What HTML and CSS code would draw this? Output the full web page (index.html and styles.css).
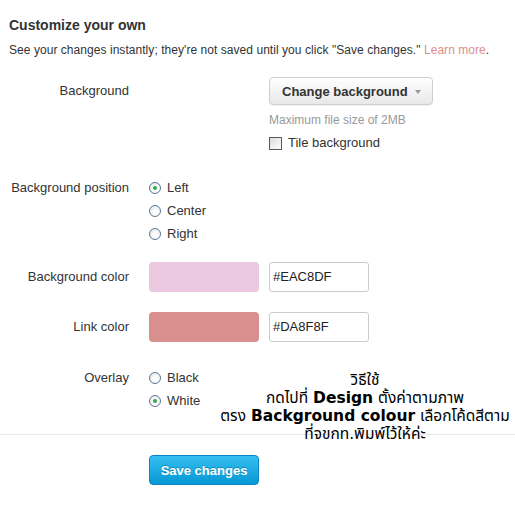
FILE: index.html
```html
<!DOCTYPE html>
<html>
<head>
<meta charset="utf-8">
<link rel="stylesheet" href="styles.css">
</head>
<body>
<div class="page">
  <div class="intro">
    <h2 class="title">Customize your own</h2>
    <p class="desc">See your changes instantly; they're not saved until you click "Save changes." <a class="link" href="#">Learn more</a>.</p>
  </div>

  <div class="form">
    <div class="row row-bg">
      <div class="label label-tall">Background</div>
      <div class="controls offset">
        <button class="btn-change">Change background <span class="caret"></span></button>
        <div class="hint">Maximum file size of 2MB</div>
        <label class="check"><span class="checkbox"></span>Tile background</label>
      </div>
    </div>

    <div class="row row-pos">
      <div class="label label-radio">Background position</div>
      <div class="controls">
        <label class="radio-line"><span class="radio checked"></span>Left</label>
        <label class="radio-line"><span class="radio"></span>Center</label>
        <label class="radio-line"><span class="radio"></span>Right</label>
      </div>
    </div>

    <div class="row row-color">
      <div class="label label-swatch">Background color</div>
      <div class="controls color-ctrl">
        <span class="swatch swatch-bg"></span>
        <span class="hex">#EAC8DF</span>
      </div>
    </div>

    <div class="row row-link">
      <div class="label label-swatch">Link color</div>
      <div class="controls color-ctrl">
        <span class="swatch swatch-link"></span>
        <span class="hex">#DA8F8F</span>
      </div>
    </div>

    <div class="row row-overlay">
      <div class="label label-radio">Overlay</div>
      <div class="controls">
        <label class="radio-line"><span class="radio"></span>Black</label>
        <label class="radio-line"><span class="radio checked"></span>White</label>
      </div>
    </div>
  </div>

  <div class="footer">
    <button class="btn-save">Save changes</button>
  </div>

  <div class="note">
    <div>วิธีใช้</div>
    <div>กดไปที่ <b>Design</b> ตั้งค่าตามภาพ</div>
    <div>ตรง <b>Background colour</b> เลือกโค้ดสีตาม</div>
    <div>ที่จขกท.พิมพ์ไว้ให้ค่ะ</div>
  </div>
</div>
</body>
</html>
```

FILE: styles.css
```css
html, body {
  margin: 0;
  padding: 0;
  background: #ffffff;
}

body {
  font-family: "Liberation Sans", Arial, sans-serif;
  font-size: 13px;
  color: #333333;
}

.page {
  position: relative;
  width: 515px;
  height: 505px;
  padding-top: 16px;
  box-sizing: border-box;
}

.intro {
  padding-left: 9px;
}

.title {
  margin: 0;
  font-size: 14px;
  font-weight: bold;
  line-height: 18px;
  color: #333333;
}

.desc {
  margin: 7px 0 0 0;
  line-height: 18px;
  font-size: 12px;
  letter-spacing: 0.05px;
  white-space: nowrap;
  color: #333333;
}

.link {
  color: #da8f8f;
  text-decoration: none;
}

.form {
  padding-left: 9px;
  margin-top: 18px;
}

.row {
  display: flex;
  align-items: flex-start;
}

.label {
  width: 120px;
  flex: none;
  text-align: right;
  color: #333333;
}

.label-tall { line-height: 28px; }
.label-radio { line-height: 23px; }
.label-swatch { line-height: 30px; }

.controls {
  margin-left: 20px;
  display: flex;
  flex-direction: column;
}

.controls.offset {
  margin-left: 140px;
  align-items: flex-start;
}

.btn-change {
  height: 28px;
  padding: 0 11px 0 12px;
  border: 1px solid #cfcfcf;
  border-radius: 4px;
  background: linear-gradient(#ffffff, #e8e8e8);
  box-shadow: 0 1px 1px rgba(0, 0, 0, 0.06);
  font-family: "Liberation Sans", Arial, sans-serif;
  font-size: 13px;
  font-weight: bold;
  color: #333333;
  display: flex;
  align-items: center;
  gap: 7px;
  cursor: pointer;
}

.caret {
  width: 0;
  height: 0;
  border-left: 3.5px solid transparent;
  border-right: 3.5px solid transparent;
  border-top: 4px solid #999999;
  margin-top: 1px;
}

.hint {
  margin-top: 7px;
  line-height: 16px;
  font-size: 12px;
  color: #999999;
}

.check {
  margin-top: 6px;
  line-height: 18px;
  display: flex;
  align-items: center;
  gap: 6px;
  color: #333333;
}

.checkbox {
  width: 11px;
  height: 11px;
  border: 1px solid #4f5b66;
  background: linear-gradient(135deg, #dcdcdc, #ffffff);
  display: inline-block;
}

.row-pos { margin-top: 24px; }
.row-color { margin-top: 17px; }
.row-link { margin-top: 20px; }
.row-overlay { margin-top: 24px; }

.radio-line {
  line-height: 23px;
  display: flex;
  align-items: center;
  gap: 6px;
  color: #333333;
}

.radio {
  width: 10px;
  height: 10px;
  border: 1px solid #5d7690;
  border-radius: 50%;
  background: radial-gradient(circle at 60% 65%, #ffffff 20%, #e2e6ea 90%);
  display: inline-flex;
  align-items: center;
  justify-content: center;
  flex: none;
}

.radio.checked::after {
  content: "";
  width: 4px;
  height: 4px;
  border-radius: 50%;
  background: #3aa84a;
}

.color-ctrl {
  flex-direction: row;
  gap: 10px;
}

.swatch {
  width: 110px;
  height: 30px;
  border-radius: 4px;
  display: block;
}

.swatch-bg { background: #eac8df; }
.swatch-link { background: #da8f8f; }

.hex {
  width: 100px;
  height: 30px;
  box-sizing: border-box;
  border: 1px solid #cccccc;
  border-radius: 3px;
  padding-left: 3px;
  line-height: 28px;
  color: #222222;
  display: block;
}

.footer {
  margin-top: 22px;
  border-top: 1px solid #e8e8e8;
  padding: 20px 0 0 149px;
}

.btn-save {
  width: 110px;
  height: 30px;
  border: 1px solid #0c85c8;
  border-radius: 4px;
  background: linear-gradient(#35bff0, #0698d4);
  color: #ffffff;
  font-family: "Liberation Sans", Arial, sans-serif;
  font-size: 13px;
  font-weight: bold;
  text-shadow: 0 -1px 0 rgba(0, 0, 0, 0.25);
  cursor: pointer;
  padding: 0;
}

.note {
  position: absolute;
  left: 214px;
  top: 371px;
  width: 302px;
  text-align: center;
  font-family: "DejaVu Sans", "Noto Sans", "Noto Sans Thai", sans-serif;
  font-size: 15.5px;
  line-height: 18px;
  color: #000000;
}

.note b {
  font-weight: bold;
}
```
